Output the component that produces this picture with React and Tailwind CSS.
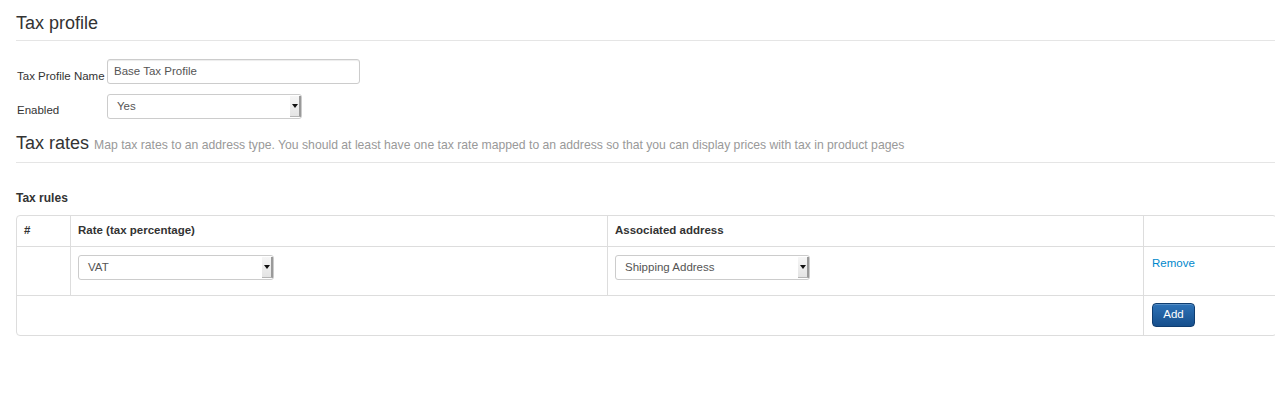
import React from "react";

function FakeSelect({ value, width }) {
  return (
    <div
      className={`flex h-[25px] ${width} items-stretch rounded-[3px] border border-[#cccccc] bg-white`}
    >
      <div className="flex flex-1 items-center pl-[9px] text-[11.5px] text-[#555555]">{value}</div>
      <div className="my-[1px] mr-0 flex w-[11px] items-center justify-center border-r-2 border-b border-r-[#9a9a9a] border-b-[#b5b5b5] bg-gradient-to-b from-[#f6f6f6] to-[#e4e4e4]">
        <svg width="6" height="4" viewBox="0 0 6 4">
          <path d="M0 0 H6 L3 4 Z" fill="#111" />
        </svg>
      </div>
    </div>
  );
}

export default function App() {
  return (
    <div className="w-full overflow-hidden bg-white" style={{ height: 400 }}>
      <div
        className="ml-4 w-[1261px] text-[#333333]"
        style={{ fontFamily: '"Liberation Sans", Arial, sans-serif' }}
      >
        <div className="border-b border-[#e5e5e5] pt-[13px] pb-[6px]">
          <h3 className="text-[18px] leading-[21px] font-normal">Tax profile</h3>
        </div>

        <div className="mt-[17px] flex items-center">
          <label className="mt-[10px] w-[91px] pl-[1px] text-[11.5px] whitespace-nowrap">Tax Profile Name</label>
          <div className="flex h-[25px] w-[253px] items-center rounded-[3px] border border-[#cccccc] bg-white pl-[6px] text-[11.5px] text-[#555555] shadow-[inset_0_1px_1px_rgba(0,0,0,0.075)]">
            Base Tax Profile
          </div>
        </div>

        <div className="mt-[9px] flex items-center">
          <label className="mt-[8px] w-[91px] pl-[1px] text-[11.5px]">Enabled</label>
          <FakeSelect value="Yes" width="w-[195px]" />
        </div>

        <div className="mt-[13px] flex items-baseline border-b border-[#e5e5e5] pb-[8px]">
          <h3 className="text-[18px] leading-[21px] font-normal">Tax rates</h3>
          <span className="ml-[5px] text-[12.2px] text-[#999999]">
            Map tax rates to an address type. You should at least have one tax rate mapped to an address so that you can display prices with tax in product pages
          </span>
        </div>

        <div className="mt-[28px] text-[12px] leading-[14px] font-bold">Tax rules</div>

        <table className="mt-[10px] w-[1261px] border-separate border-spacing-0 rounded-[4px] border border-[#dddddd] text-[11.5px]">
          <thead>
            <tr>
              <th className="h-[30px] w-[53px] px-[7px] text-left align-middle font-bold">#</th>
              <th className="w-[537px] border-l border-[#dddddd] px-[7px] text-left align-middle font-bold">Rate (tax percentage)</th>
              <th className="w-[536px] border-l border-[#dddddd] px-[7px] text-left align-middle font-bold">Associated address</th>
              <th className="border-l border-[#dddddd] px-[7px]"></th>
            </tr>
          </thead>
          <tbody>
            <tr>
              <td className="h-[49px] border-t border-[#dddddd]"></td>
              <td className="border-t border-l border-[#dddddd] px-[7px] pt-[8px] align-top">
                <FakeSelect value="VAT" width="w-[196px]" />
              </td>
              <td className="border-t border-l border-[#dddddd] px-[7px] pt-[8px] align-top">
                <FakeSelect value="Shipping Address" width="w-[195px]" />
              </td>
              <td className="border-t border-l border-[#dddddd] px-[8px] pt-[8px] align-top">
                <a className="text-[11.5px] text-[#0088cc]" href="#">Remove</a>
              </td>
            </tr>
            <tr>
              <td colSpan={3} className="h-[40px] border-t border-[#dddddd]"></td>
              <td className="border-t border-l border-[#dddddd] px-[8px] pt-[7px] align-top">
                <button className="h-[24px] w-[43px] rounded-[4px] border border-[#0f3d70] bg-gradient-to-b from-[#2e73b8] to-[#164f8c] text-[11.5px] text-white shadow-[inset_0_1px_0_rgba(255,255,255,0.2)]">
                  Add
                </button>
              </td>
            </tr>
          </tbody>
        </table>
      </div>
    </div>
  );
}
